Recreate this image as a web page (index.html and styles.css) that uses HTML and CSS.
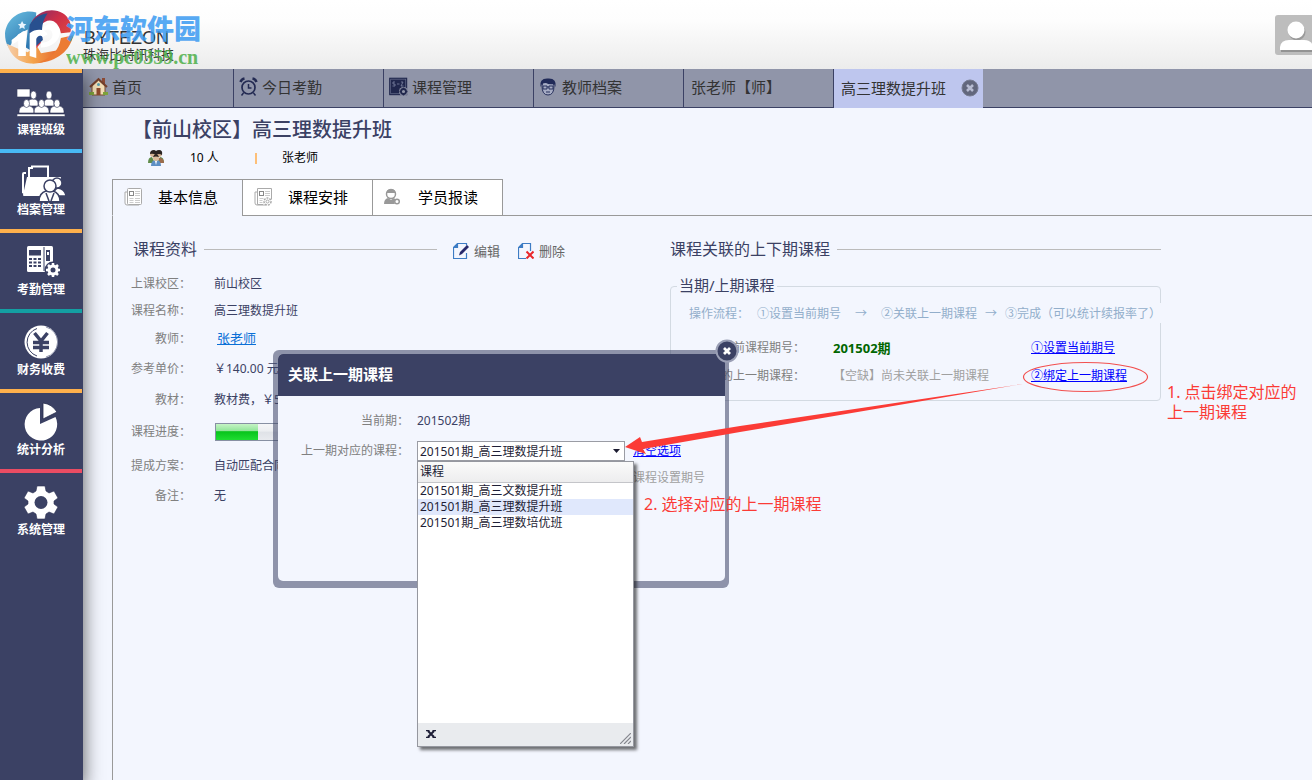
FILE: index.html
```html
<!DOCTYPE html>
<html lang="zh-CN">
<head>
<meta charset="utf-8">
<title>高三理数提升班</title>
<link rel="stylesheet" href="styles.css">
</head>
<body>
<header class="topbar">
  <div class="brand">
    <svg class="brand-mark" viewBox="0 0 76 60" aria-hidden="true">
      <defs>
        <linearGradient id="gb" x1="0" y1="0" x2="0.6" y2="1"><stop offset="0" stop-color="#6cc0e2"/><stop offset="1" stop-color="#2a74ae"/></linearGradient>
        <linearGradient id="gr" x1="0" y1="0" x2="1" y2="1"><stop offset="0" stop-color="#7c2c68"/><stop offset="0.45" stop-color="#cf2f48"/><stop offset="1" stop-color="#e2573a"/></linearGradient>
        <linearGradient id="go" x1="0" y1="0" x2="1" y2="0"><stop offset="0" stop-color="#f6cfae"/><stop offset="0.5" stop-color="#f4a44c"/><stop offset="1" stop-color="#e66a30"/></linearGradient>
      </defs>
      <path d="M33 3C18-1 2 8 0 25c0 6 1 11 4 15l10-14 10-5-2 19 10 6V22z" fill="url(#gb)"/>
      <path d="M2 36c4 13 13 20 25 21 13 1 24-5 29-14l-18 3-5-9-9 8-9-3z" fill="url(#go)"/>
      <path d="M30 10C38 0 52-2 61 4c7 4 10 13 8 20l-10 1C57 14 50 9 42 13c-8 4-9 14-4 22l-6 7C25 32 24 18 30 10z" fill="url(#gr)"/>
      <path d="M59 30l13-3c-3 16-17 28-37 29 14-5 22-13 24-26z" fill="#ec7b34"/>
      <path d="M26 16c5-7 11-11 19-12-6 8-7 18-5 28l-9 8c-5-7-6-16-5-24z" fill="#28508f"/>
      <path d="M7 32l12-9h3v26h-8V33l-7 4zM26 42V25c6-5 16-5 19 1l-5 3c-3-3-6-1-7 2v20l-7-2z" fill="#fff"/>
      <path d="M40 19c8-7 19-4 18 6-1 9-10 15-20 15v-5c8 0 13-4 12-10-1-5-6-5-10-2z" fill="#fff"/>
      <path d="M18 12l1.500 3 3 .4-2.200 2 .6 3-2.900-1.500-2.700 1.500.5-3-2.200-2 3-.4z" fill="#e8f5ff"/>
    </svg>
    <div class="brand-name">BYTEZON</div>
    <div class="brand-company">珠海比特讯科技</div>
    <div class="site-name">河东软件园</div>
    <div class="site-url">www.pc0359.cn</div>
  </div>
  <button class="avatar" aria-label="用户">
    <svg viewBox="0 0 37 40" aria-hidden="true"><circle cx="22" cy="17" r="8.500" fill="#777" opacity=".5"/><path d="M6 37v-4q0-6 7-6h17q7 0 7 6v4z" fill="#777" opacity=".6"/><circle cx="21" cy="15" r="8.500" fill="#fff"/><path d="M5 35v-3q1-7 9-7h15q8 0 9 7v3z" fill="#fff"/></svg>
  </button>
</header>

<div class="shell">
  <nav class="sidebar" aria-label="主导航">
    <a href="#" class="side-item orange">
      <svg viewBox="0 0 48 36" fill="#fff" stroke="#2b3153" stroke-width=".6" aria-hidden="true"><rect y="4" width="13" height="8"/><path d="M11 21v-3q0-4 5-4t5 4v3zM27 21v-3q0-4 5-4t5 4v3z"/><ellipse cx="16.500" cy="10" rx="3" ry="4"/><ellipse cx="32" cy="10" rx="3" ry="4"/><path d="M2 28v-2q0-4 4-5h7q4 1 4 5v2zM17 28v-2q0-4 4-5h7q4 1 4 5v2zM33 28v-2q0-4 4-5h6q4 1 4 5v2z"/><ellipse cx="9.500" cy="18.500" rx="3" ry="4"/><ellipse cx="24.500" cy="18.500" rx="3" ry="4"/><ellipse cx="40" cy="18.500" rx="3" ry="4"/><rect y="29" width="48" height="2.500"/></svg>
      <span>课程班级</span></a>
    <a href="#" class="side-item blue">
      <svg viewBox="0 0 48 36" fill="#fff" aria-hidden="true"><path d="M12 12V3h3V1.500h16V12" fill="none" stroke="#fff" stroke-width="2"/><path d="M7 29L5 28V9q0-2 2-2h2v2H7z"/><path d="M6 30l4-18h34l-4 18q0 1-2 1H7q-1 0-1-1z"/><g stroke="#3b4164" stroke-width="1.500"><path d="M36 31q1-7 5-8 7 1 8 8z"/><circle cx="40" cy="18" r="5"/><path d="M22 37q0-9 7-11h7q7 2 7 11z"/><circle cx="33" cy="21" r="6"/><path d="M29 28l3 8M37 28l-3 8"/></g></svg>
      <span>档案管理</span></a>
    <a href="#" class="side-item orange">
      <svg viewBox="0 0 48 36" fill="#fff" aria-hidden="true"><rect x="10" y="1" width="26" height="26" rx="1.500"/><g fill="#3b4164"><rect x="12" y="5" width="12" height="5.500"/><path d="M12 13h3v2h-3zM16.500 13h3v2h-3zM21 13h3v2h-3zM12 16.500h3v2h-3zM16.500 16.500h3v2h-3zM21 16.500h3v2h-3zM12 20h3v2h-3zM16.500 20h3v2h-3zM21 20h3v2h-3zM26.500 2h1v24h-1zM29 5h4v11h-4z"/><circle cx="36" cy="25" r="8.500"/></g><path d="M30 7h2v3h-2z"/><circle cx="36" cy="25" r="4" fill="none" stroke="#fff" stroke-width="3"/><path d="M36 18v14M29 25h14M31 20l10 10M41 20L31 30" stroke="#fff" stroke-width="2.500"/><circle cx="36" cy="25" r="2.500" fill="#3b4164"/></svg>
      <span>考勤管理</span></a>
    <a href="#" class="side-item teal">
      <svg viewBox="0 0 48 36" fill="none" aria-hidden="true"><circle cx="24" cy="17" r="16.500" fill="#fff"/><path d="M20 3.500A14.500 14.500 0 0 0 20 31" stroke="#3b4164"/><path d="M29 2a15.500 15.500 0 0 1 0 30" stroke="#8d92aa"/><path d="M17.500 8l6.500 8 6.500-8M24 15v12M16 17.500h16M16 22.500h16" stroke="#3b4164" stroke-width="3.500"/></svg>
      <span>财务收费</span></a>
    <a href="#" class="side-item orange">
      <svg viewBox="0 0 48 36" fill="#fff" overflow="visible" aria-hidden="true"><path d="M23 3v16l15.500-7A16.300 16.300 0 1 1 23 3z"/><path d="M26-2q9 1 14 9l-14 7z" stroke="#262c4c" stroke-width=".8"/></svg>
      <span>统计分析</span></a>
    <a href="#" class="side-item red">
      <svg viewBox="0 0 48 36" aria-hidden="true"><path d="M20 1h8l1 5 3 2 5-2 4 7-4 3v3l4 3-4 7-5-2-3 2-1 5h-8l-1-5-3-2-5 2-4-7 4-3v-3l-4-3 4-7 5 2 3-2z" fill="#fff" stroke="#2b3153" stroke-width=".6"/><circle cx="24" cy="17.500" r="6.500" fill="#3b4164"/></svg>
      <span>系统管理</span></a>
  </nav>

  <main class="main">
    <nav class="pagetabs" aria-label="已打开页面">
      <a href="#" class="pagetab">
        <svg viewBox="0 0 19 19" aria-hidden="true"><path d="M13 1h3v6h-3z" fill="#8c4a35"/><path d="M3 9l6.500-6L16 9v9H3z" fill="#f3dfb8" stroke="#7c4c2c"/><path d="M1 10l8.500-8L18 10" fill="none" stroke="#74402c" stroke-width="2"/><rect x="7.500" y="11" width="4" height="7" fill="#8f4a2c"/><circle cx="9.500" cy="7.500" r="1.500" fill="#58a0b0"/><path d="M0 15h5v3H0zM14 15h5v3h-5z" fill="#7da33c"/></svg>首页</a>
      <a href="#" class="pagetab">
        <svg viewBox="0 0 19 19" fill="none" stroke="#232a52" stroke-width="1.700" aria-hidden="true"><circle cx="9.500" cy="10.500" r="6.500"/><path d="M1.500 5q1-3 4-3.500M17.500 5q-1-3-4-3.500" stroke-width="2.600"/><path d="M4.500 16l-2 2.500M14.500 16l2 2.500M9.500 7v4h3" stroke-width="1.500"/></svg>今日考勤</a>
      <a href="#" class="pagetab">
        <svg viewBox="0 0 19 19" aria-hidden="true"><rect x=".7" y="1.200" width="17" height="16.500" fill="#20274d" stroke="#20274d"/><rect x="1.700" y="2.200" width="15" height="14.500" fill="none" stroke="#6c7392" stroke-width=".6"/><path d="M6 5H4v2h2v2H3.500M8 7h2.500M12 5h2l-2 4h2.500" fill="none" stroke="#7f86a4" stroke-width=".8"/><circle cx="14.500" cy="14.500" r="4.500" fill="#9095a9"/><circle cx="14.500" cy="14.500" r="2.500" fill="none" stroke="#20274d" stroke-width="1.800"/><path d="M14.500 10.500v1.500M14.500 17v1.500M10.500 14.500H12M17 14.500h1.500" stroke="#20274d" stroke-width="1.500"/></svg>课程管理</a>
      <a href="#" class="pagetab">
        <svg viewBox="0 0 19 19" aria-hidden="true"><path d="M3 9q0 9 6 9t6-9l-1-4H4z" fill="#a6acc4" stroke="#27305c"/><path d="M1.500 10Q0 1 9 1.500q9-.5 7.500 8.500l-1.500-3q-5 1-8-1-3 0-4 1z" fill="#202a58"/><path d="M4 9h4v3H4zM10 9h4v3h-4zM8 10h2M7 15h4" fill="none" stroke="#27305c"/></svg>教师档案</a>
      <a href="#" class="pagetab">张老师【师】</a>
      <div class="pagetab current"><a href="#">高三理数提升班</a>
        <button class="tabclose" aria-label="关闭标签"><svg viewBox="0 0 18 18" aria-hidden="true"><circle cx="9" cy="9" r="8" fill="#62677d" stroke="#777c92"/><path d="M6 6l6 6M12 6l-6 6" stroke="#b7bcd2" stroke-width="2.500"/></svg></button></div>
    </nav>

    <section class="page">
      <h1 class="title">【前山校区】高三理数提升班</h1>
      <div class="meta">
        <svg viewBox="0 0 16 16" aria-hidden="true"><circle cx="5" cy="4" r="3" fill="#d6b596"/><circle cx="11" cy="4" r="3" fill="#d6b596"/><path d="M2 4q0-4 4-4 1 0 2 1 1-1 3-1 4 0 3 5-3-2-6 0-3-2-6-1z" fill="#2b2422"/><path d="M0 13q0-6 4-6l3 6zM16 13q0-6-4-6l-3 6z" fill="#608c4a"/><path d="M10 8h3q3 1 3 5h-4z" fill="#9c6b4c"/><path d="M3 16q0-6 5-6t5 6z" fill="#5d8fc4"/><circle cx="8" cy="8" r="3" fill="#dcbc9c"/><path d="M5 7q1-3 3-3t3 3q-3-1-6 0z" fill="#302622"/><path d="M7 11l1 4 1-4z" fill="#fff"/></svg>
        <span class="count">10 人</span><i class="bar"></i><span>张老师</span>
      </div>

      <div class="subtabs" role="tablist">
        <button class="subtab selected" role="tab" aria-selected="true"><svg viewBox="0 0 18 18" fill="#fff" stroke="#aaa" aria-hidden="true"><path d="M4 4H1v11q0 2 2 2h12"/><rect x="3.500" y=".5" width="14" height="16" rx="1"/><rect x="5.500" y="3.500" width="4" height="4" stroke="#888"/><path d="M11 3.500h5M11 5.500h5M11 7.500h5M5.500 10.500h4M11 10.500h5M5.500 12.500h4M11 12.500h5M5.500 14.500h4M11 14.500h5" stroke="#ccc"/></svg><span>基本信息</span></button>
        <button class="subtab" role="tab" aria-selected="false"><svg viewBox="0 0 18 18" fill="#fff" stroke="#aaa" aria-hidden="true"><path d="M4 4H1v11q0 2 2 2h9"/><path d="M3.500 16.500V.5h14v11M3.500 16.500H9"/><rect x="5.500" y="3.500" width="4" height="4" stroke="#888"/><path d="M11 3.500h5M11 5.500h5M11 7.500h5M5.500 10.500h4M5.500 12.500h3M5.500 14.500h3" stroke="#ccc"/><circle cx="13.500" cy="13.500" r="3.500" stroke-dasharray="2 1" stroke-width="1.500"/><circle cx="13.500" cy="13.500" r="1.500"/></svg><span>课程安排</span></button>
        <button class="subtab" role="tab" aria-selected="false"><svg viewBox="0 0 18 18" fill="#999" aria-hidden="true"><circle cx="7" cy="6" r="4.500" fill="#fff" stroke="#999" stroke-width="1.500"/><path d="M2.500 5Q3 1 7 1t4.500 4Q7 5 2.500 5z"/><path d="M0 16q0-5 4-6l3 2 3-2 2 2q-3 1-1 4z"/><circle cx="13" cy="13.500" r="2.300" fill="#fff" stroke="#999" stroke-width="1.500"/></svg><span>学员报读</span></button>
        <div class="filler"></div>
      </div>

      <div class="panel">
        <section class="info">
          <div class="sechead"><h2>课程资料</h2><i class="rule"></i>
            <div class="actions">
              <button class="action"><svg viewBox="0 0 16 16" fill="none" aria-hidden="true"><path d="M4.500.5h9v2M.5 4.500v11h13V10M.5 4.500l4-4v4z" stroke="#3d7cc4" stroke-width="1.200"/><path d="M.5 4.500l4-4v4z" fill="#3d7cc4"/><path d="M6 12.500l1-3.500 7-7 2 2-7 7z" fill="#28296b"/></svg>编辑</button>
              <button class="action"><svg viewBox="0 0 16 16" fill="none" aria-hidden="true"><path d="M8 15.500H.5v-11l4-4h8V8M.5 4.500h4v-4" stroke="#3d7cc4" stroke-width="1.200"/><path d="M.5 4.500l4-4v4z" fill="#3d7cc4"/><path d="M8.500 8.500l7 7M15.500 8.500l-7 7" stroke="#e9272b" stroke-width="2"/></svg>删除</button>
            </div>
          </div>
          <dl class="facts">
            <dt>上课校区：</dt><dd>前山校区</dd>
            <dt>课程名称：</dt><dd>高三理数提升班</dd>
            <dt>教师：</dt><dd><a href="#" class="teacher">张老师</a></dd>
            <dt>参考单价：</dt><dd>￥140.00 元</dd>
            <dt>教材：</dt><dd>教材费，￥50</dd>
            <dt>课程进度：</dt><dd><progress class="progress" value="36" max="100" aria-label="课程进度"></progress></dd>
            <dt>提成方案：</dt><dd>自动匹配合同</dd>
            <dt>备注：</dt><dd>无</dd>
          </dl>
        </section>

        <section class="related">
          <div class="sechead"><h2>课程关联的上下期课程</h2><i class="rule"></i></div>
          <fieldset class="terms">
            <legend>当期/上期课程</legend>
            <div class="flow"><span>操作流程：</span><span>①设置当前期号</span><span class="wide">→</span><span>②关联上一期课程</span><span>→</span><span>③完成（可以统计续报率了）</span></div>
            <div class="termgrid">
              <span class="key">当前课程期号：</span><strong>201502期</strong><a href="#">①设置当前期号</a>
              <span class="key">对应的上一期课程：</span><span class="none">【空缺】尚未关联上一期课程</span><a href="#">②绑定上一期课程</a>
            </div>
          </fieldset>
        </section>
      </div>
    </section>
  </main>
</div>

<div class="dialog" role="dialog" aria-labelledby="dlg-title">
  <div class="dialog-body">
    <h2 id="dlg-title">关联上一期课程</h2>
    <div class="form">
      <span class="key">当前期：</span><span class="now">201502期</span><span></span>
      <label class="key" for="prev">上一期对应的课程：</label>
      <div class="combo">
        <select id="prev"><option>201501期_高三理数提升班</option><option>201501期_高三文数提升班</option><option>201501期_高三理数培优班</option></select>
        <svg class="caret" viewBox="0 0 7 4" aria-hidden="true"><path d="M0 0h7L3.500 4z" fill="#1b1b30"/></svg>
        <div class="popup">
          <table>
            <thead><tr><th scope="col">课程</th></tr></thead>
            <tbody>
              <tr><td>201501期_高三文数提升班</td></tr>
              <tr class="hover"><td>201501期_高三理数提升班</td></tr>
              <tr><td>201501期_高三理数培优班</td></tr>
            </tbody>
          </table>
          <div class="popup-foot">
            <button aria-label="关闭列表"><svg viewBox="0 0 10 8" aria-hidden="true"><path d="M2 1l6 6M8 1L2 7" stroke="#1e1e36" stroke-width="2"/><path d="M0 .7h3.500M6.500.7H10M0 7.300h3.500M6.500 7.300H10" stroke="#1e1e36" stroke-width="1.200"/></svg></button>
            <svg class="grip" viewBox="0 0 11 11" aria-hidden="true"><path d="M0 11L11 0M4 11l7-7M8 11l3-3" stroke="#85878e" stroke-width="1.200"/></svg>
          </div>
        </div>
      </div>
      <a href="#" class="clear">清空选项</a>
      <span class="hint">课程设置期号</span>
    </div>
  </div>
  <button class="dialog-close" aria-label="关闭"><svg viewBox="0 0 24 24" aria-hidden="true"><circle cx="12" cy="12" r="10.500" fill="#3b4164" stroke="#9a9fb5" stroke-width="2"/><path d="M9 9l6 6M15 9l-6 6" stroke="#fff" stroke-width="2.800"/></svg></button>
</div>

<svg class="marks" viewBox="0 0 530 96" aria-hidden="true">
  <path d="M0 87l15-10 2 5 98-16 283-42-283 48-97 17 3 5z" fill="#fb3b36"/>
  <ellipse cx="460.500" cy="17" rx="62" ry="14.500" fill="none" stroke="#f2504f" stroke-width="1.200"/>
</svg>
<p class="note step-one">1. 点击绑定对应的<br>上一期课程</p>
<p class="note step-two">2. 选择对应的上一期课程</p>
</body>
</html>
```
FILE: styles.css
```css
* { box-sizing: border-box; }
body {
  margin: 0;
  min-height: 100vh;
  display: flex;
  flex-direction: column;
  position: relative;
  overflow-x: hidden;
  background: #f3f6fe;
  color: #3b4164;
  font: 12px/16px "Noto Sans", "Noto Sans CJK SC", sans-serif;
}
button { font: inherit; color: inherit; background: none; border: 0; padding: 0; cursor: pointer; }
svg { display: block; flex: none; }
h1, h2, p, dl, dd { margin: 0; }
a { color: #00f; }

/* top bar */
.topbar {
  height: 69px;
  display: flex;
  justify-content: space-between;
  align-items: center;
  background: linear-gradient(#fff, #fdfdfd 30%, #ececec);
}
.brand { position: relative; width: 210px; height: 69px; }
.brand-mark { position: absolute; left: 5px; top: 9px; width: 72px; height: 58px; }
.brand-name, .brand-company, .site-name, .site-url { position: absolute; white-space: nowrap; }
.brand-name { left: 84px; top: 28px; font: 18px/20px "Liberation Sans", sans-serif; color: #333; }
.brand-company { left: 83px; top: 46px; font-size: 13px; color: #333; }
.site-name { left: 66px; top: 12px; font: 900 27px/32px "Noto Sans CJK SC", sans-serif; color: #3b9bf2; opacity: .85; }
.site-url { left: 66px; top: 46px; font: bold 20px/22px "Liberation Serif", serif; color: #4eb04a; opacity: .85; }
.avatar { width: 37px; height: 40px; background: #bdbdbd; border-radius: 3px 0 0 3px; overflow: hidden; }

/* sidebar */
.shell { flex: 1; display: flex; }
.sidebar {
  width: 83px;
  flex: none;
  background: #3b4164;
  box-shadow: 0 8px 18px rgba(0, 0, 0, .65);
  z-index: 1;
  clip-path: inset(0 -24px 0 0);
}
.side-item {
  display: flex;
  flex-direction: column;
  align-items: center;
  gap: 1px;
  height: 80px;
  margin-right: 1px;
  padding-top: 12px;
  border-top: 4px solid;
  text-decoration: none;
}
.side-item svg { width: 48px; height: 36px; }
.side-item span { color: #fff; font-weight: bold; }
.orange { border-color: #fdb04c; }
.blue { border-color: #48b9f4; }
.teal { border-color: #149fa2; }
.red { border-color: #ea4c63; }

/* open page tabs */
.main { flex: 1; min-width: 0; display: flex; flex-direction: column; }
.pagetabs {
  display: flex;
  height: 39px;
  padding-left: 1px;
  background: #9095a9;
  border-bottom: 1px solid #3b4164;
}
.pagetab {
  width: 150px;
  height: 38px;
  display: flex;
  align-items: center;
  gap: 4px;
  padding: 0 4px 3px 5px;
  border-right: 1px solid #3b4164;
  color: #333;
  font-size: 15px;
  text-decoration: none;
  white-space: nowrap;
}
.pagetab svg { width: 19px; height: 19px; }
.pagetab:nth-child(5) { padding-left: 7px; }
.pagetab.current { width: 149px; height: 39px; padding: 0 4px 2px 7px; border: 0; background: #bec6ee; justify-content: space-between; }
.pagetab a { color: #333; text-decoration: none; }
.tabclose svg { width: 18px; height: 18px; }

/* page heading */
.page { flex: 1; display: flex; flex-direction: column; padding-left: 29px; }
.title { padding: 10px 0 0 20px; font-size: 20px; line-height: 24px; font-weight: 500; }
.meta { display: flex; align-items: center; height: 32px; padding-left: 36px; color: #000; }
.meta svg { width: 16px; height: 16px; }
.count { width: 65px; margin-left: 26px; }
.bar { width: 2px; height: 11px; margin-right: 25px; background: #fdbf78; }

.subtabs { display: flex; height: 37px; margin-top: 5px; }
.subtab {
  width: 130px;
  display: flex;
  align-items: center;
  gap: 16px;
  padding: 0 0 2px 11px;
  border: solid #999;
  border-width: 1px 0 1px 1px;
  background: #fff;
  color: #000;
  font-size: 15px;
}
.subtab svg { width: 18px; height: 18px; }
.subtab.selected { background: none; border-bottom-color: transparent; }
.filler { flex: 1; border-left: 1px solid #999; border-bottom: 1px solid #999; }

.panel {
  flex: 1;
  display: grid;
  grid-template-columns: 539px minmax(0, 491px);
  align-items: start;
  padding: 21px 0 0 18px;
  border-left: 1px solid #999;
}
.sechead { display: flex; align-items: center; height: 24px; }
.sechead h2 { font-size: 16px; font-weight: normal; white-space: nowrap; }
.rule { flex: 1; height: 1px; margin-left: 7px; background: #bbb; }
.info .sechead { width: 434px; padding-left: 2px; }
.actions { display: flex; gap: 18px; margin: 3px 0 0 16px; }
.action { display: flex; align-items: center; gap: 5px; font-size: 13px; color: #666; }
.action svg { width: 16px; height: 16px; }

.facts {
  display: grid;
  grid-template-columns: 60px 1fr;
  grid-template-rows: 27px 27px 29px 31px 31px 33px 36px 24px;
  column-gap: 23px;
  align-items: center;
  margin-top: 9px;
}
.facts dt { text-align: right; color: #808080; }
.teacher { margin-left: 3px; font-size: 13px; color: #0a6fd6; }
.progress {
  display: block;
  appearance: none;
  width: 120px;
  height: 18px;
  margin-left: 1px;
  border: 1px solid #8790a3;
}
.progress::-webkit-progress-bar { background: linear-gradient(#f5f6f8, #eceef1 45%, #dfe2e7 50%, #e8eaee); }
.progress::-webkit-progress-value { background: linear-gradient(#c5f4c5, #93e69a 42%, #08c41c 48%, #1fdd32); }

/* linked terms */
.terms {
  margin: 17px 0 0;
  padding: 0 0 10px;
  border: 1px solid #d3dae2;
  border-radius: 4px;
  min-width: 0;
}
.terms legend { margin-left: 6px; padding: 0 2px 2px; font-size: 15px; line-height: 14px; }
.flow {
  display: flex;
  gap: 8px;
  height: 20px;
  margin: 9px -1px 11px 0;
  padding-left: 18px;
  line-height: 20px;
  font-family: "Noto Sans CJK SC", sans-serif;
  color: #92aecb;
  white-space: nowrap;
  background: #f3f6fe;
}
.flow .wide { margin: 0 6px; }
.termgrid {
  display: grid;
  grid-template-columns: 134px 170px 1fr;
  grid-auto-rows: 28px;
  column-gap: 28px;
  align-items: center;
  white-space: nowrap;
}
.key { color: #808080; text-align: right; }
.termgrid strong { font-size: 13px; color: #060; }
.none { color: #a0a0a0; }

/* dialog */
.dialog {
  position: absolute;
  left: 273px;
  top: 350px;
  z-index: 2;
  width: 456px;
  padding: 4px 4px 7px 5px;
  border-radius: 6px;
  background: rgba(59, 65, 100, .55);
}
.dialog-body { height: 227px; border-radius: 5px; background: #f3f6fe; }
.dialog-body h2 {
  padding: 0 10px 2px;
  border-radius: 5px 0 0 0;
  background: #3b4164;
  color: #fff;
  font-size: 15px;
  line-height: 40px;
}
.dialog-close { position: absolute; right: -10px; top: -11px; }
.dialog-close svg { width: 24px; height: 24px; }
.form {
  display: grid;
  grid-template-columns: 131px 208px 1fr;
  grid-template-rows: 30px 30px 24px;
  column-gap: 8px;
  align-items: center;
  padding-top: 10px;
}
.combo { position: relative; height: 20px; }
.combo select {
  appearance: none;
  display: block;
  width: 100%;
  height: 20px;
  padding: 1px 2px 0;
  border: 1px solid #9a9ca4;
  border-radius: 0;
  background: #fff;
  color: #1e1e36;
  font: inherit;
}
.caret { position: absolute; right: 5px; top: 8px; width: 7px; height: 4px; }
.hint { grid-column: 3; color: #a0a0a0; }
.popup {
  position: absolute;
  left: 0;
  top: 20px;
  width: 217px;
  height: 286px;
  display: flex;
  flex-direction: column;
  justify-content: space-between;
  border: 1px solid #95979f;
  background: #fff;
  box-shadow: 3px 3px 3px rgba(0, 0, 0, .55);
  color: #1e1e36;
}
.popup table { width: 100%; border-collapse: collapse; }
.popup th, .popup td { padding: 0 2px; text-align: left; font-weight: normal; }
.popup th { height: 20px; background: linear-gradient(#fafafa, #ededee); border-bottom: 1px solid #c4c5c9; }
.popup .hover { background: #e0e8fc; }
.popup-foot {
  display: flex;
  justify-content: space-between;
  align-items: center;
  height: 23px;
  padding: 0 2px 2px 8px;
  background: #e9ebee;
}
.popup-foot svg { width: 10px; height: 8px; }
.popup-foot .grip { width: 11px; height: 11px; align-self: flex-end; }

/* walkthrough marks */
.marks { position: absolute; left: 625px; top: 360px; z-index: 3; width: 530px; height: 96px; pointer-events: none; }
.note { position: absolute; z-index: 3; color: #fb3b36; font-size: 16px; line-height: 20px; white-space: nowrap; }
.step-one { left: 1167px; top: 382px; }
.step-two { left: 644px; top: 494px; }
```
